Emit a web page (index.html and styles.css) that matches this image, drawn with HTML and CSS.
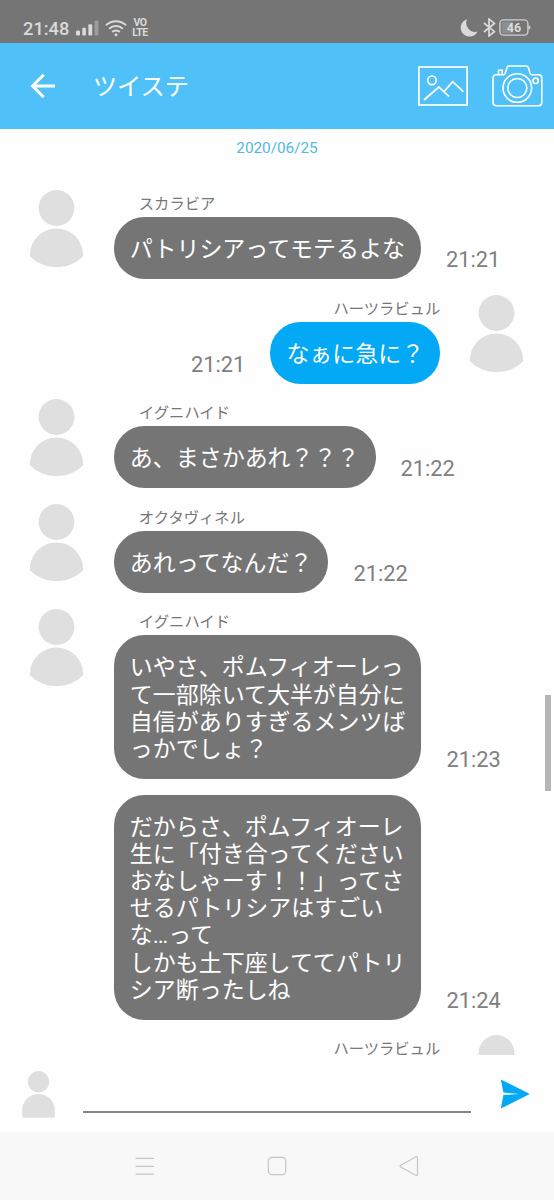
FILE: index.html
```html
<!DOCTYPE html>
<html lang="ja">
<head>
<meta charset="utf-8">
<title>ツイステ</title>
<link rel="stylesheet" href="styles.css">
</head>
<body>
<svg class="defs" width="0" height="0" aria-hidden="true">
  <defs>
    <clipPath id="round"><circle cx="38.5" cy="38.5" r="38.6"/></clipPath>
    <symbol id="person" viewBox="0 0 77 77">
      <g clip-path="url(#round)" fill="#dfdfdf">
        <circle cx="38.5" cy="18" r="17.9"/>
        <path d="M11.9 77V65a26.6 26.6 0 0 1 53.2 0V77z"/>
      </g>
    </symbol>
  </defs>
</svg>
<div class="phone">
  <div class="status">
    <span class="clock">21:48</span>
    <svg class="signal" width="23" height="16" viewBox="0 0 23 16" fill="#dadada">
      <rect x="0" y="10.5" width="4" height="5" rx="1"/>
      <rect x="6.3" y="7.8" width="3.6" height="7.7" rx="1"/>
      <rect x="12.4" y="4.2" width="3.8" height="11.3" rx="1"/>
      <rect x="18.6" y="0.5" width="3.8" height="15" rx="1" fill="#9c9c9c"/>
    </svg>
    <svg class="wifi" width="22" height="18" viewBox="0 0 22 18" fill="none" stroke="#dadada" stroke-width="2.1">
      <path d="M1 6.2a14.5 14.5 0 0 1 20 0"/>
      <path d="M4.2 9.7a10 10 0 0 1 13.6 0"/>
      <path d="M7.2 13a5.7 5.7 0 0 1 7.6 0"/>
      <circle cx="11" cy="15.8" r="1.5" fill="#dadada" stroke="none"/>
    </svg>
    <span class="volte"><span>VO</span><span>LTE</span></span>
    <span class="spacer"></span>
    <svg class="moon" width="18" height="18" viewBox="0 0 18 18"><path d="M7 0.2a8.9 8.9 0 1 0 10.6 12.4A9.1 9.1 0 0 1 7 0.2z" fill="#dadada"/></svg>
    <svg class="bt" width="13" height="19" viewBox="0 0 13 19" fill="none" stroke="#dadada" stroke-width="1.7"><path d="M1 5L11.4 13.7L6 18V1L11.4 5.4L1 14"/></svg>
    <svg class="battery" width="32" height="17" viewBox="0 0 32 17">
      <rect x="0.9" y="0.9" width="28" height="15.2" rx="3.6" fill="none" stroke="#cfcfcf" stroke-width="1.4"/>
      <rect x="2.6" y="2.6" width="11.5" height="11.8" rx="2" fill="#8d8d8d"/>
      <path d="M29.5 6.3q2 .3 2 2.2t-2 2.2z" fill="#cfcfcf"/>
      <text class="level" x="15" y="12.9" text-anchor="middle">46</text>
    </svg>
  </div>

  <header class="bar">
    <svg class="back" width="26" height="26" viewBox="0 0 26 26" fill="none" stroke="#fff" stroke-width="3"><path d="M25 13H3M13.7 1.8L2.6 13l11.1 11.2"/></svg>
    <h1 class="title">ツイステ</h1>
    <svg class="picture" width="50" height="40" viewBox="0 0 50 40" fill="none" stroke="#fff" stroke-width="1.7">
      <rect x="0.9" y="1" width="48.2" height="38"/>
      <circle cx="14" cy="14.3" r="4.3"/>
      <path d="M6 34L20.8 21L31 30.5M26 25.5L34.7 15.6L45.3 25.6"/>
    </svg>
    <svg class="camera" width="51" height="42" viewBox="0 0 51 42" fill="none" stroke="#fff" stroke-width="1.6">
      <path d="M4.3 9.7H11.8Q12.7 9.7 13 8.8L15.2 2.2Q15.5 1 16.7 1H34.6Q35.8 1 36.2 2.2L38.3 8.8Q38.6 9.7 39.6 9.7H46.6Q49.8 9.7 49.8 12.9V37.5Q49.8 40.7 46.6 40.7H4.3Q1 40.7 1 37.5V12.9Q1 9.7 4.3 9.7z"/>
      <path d="M6.5 9.5V5.3H10.2V9.5"/>
      <circle cx="25.3" cy="23" r="14.3"/>
      <circle cx="25.3" cy="23" r="9.5"/>
      <circle cx="43.6" cy="15.8" r="2.7"/>
    </svg>
  </header>

  <main class="chat">
    <div class="date">2020/06/25</div>
    <section class="msg">
      <svg class="avatar"><use href="#person"/></svg>
      <div class="body"><div class="name">スカラビア</div>
        <div class="line"><p class="bubble">パトリシアってモテるよな</p><time>21:21</time></div></div>
    </section>
    <section class="msg mine">
      <svg class="avatar"><use href="#person"/></svg>
      <div class="body"><div class="name">ハーツラビュル</div>
        <div class="line"><p class="bubble">なぁに急に？</p><time>21:21</time></div></div>
    </section>
    <section class="msg">
      <svg class="avatar"><use href="#person"/></svg>
      <div class="body"><div class="name">イグニハイド</div>
        <div class="line"><p class="bubble">あ、まさかあれ？？？</p><time>21:22</time></div></div>
    </section>
    <section class="msg">
      <svg class="avatar"><use href="#person"/></svg>
      <div class="body"><div class="name">オクタヴィネル</div>
        <div class="line"><p class="bubble">あれってなんだ？</p><time>21:22</time></div></div>
    </section>
    <section class="msg">
      <svg class="avatar"><use href="#person"/></svg>
      <div class="body"><div class="name">イグニハイド</div>
        <div class="line"><p class="bubble">いやさ、ポムフィオーレっ<br>て一部除いて大半が自分に<br>自信がありすぎるメンツば<br>っかでしょ？</p><time>21:23</time></div>
        <div class="line"><p class="bubble">だからさ、ポムフィオーレ<br>生に「付き合ってください<br>おなしゃーす！！」ってさ<br>せるパトリシアはすごい<br>な…って<br>しかも土下座しててパトリ<br>シア断ったしね</p><time>21:24</time></div></div>
    </section>
    <section class="msg mine">
      <svg class="avatar"><use href="#person"/></svg>
      <div class="body"><div class="name">ハーツラビュル</div></div>
    </section>
    <div class="thumb"></div>
  </main>

  <footer class="composer">
    <svg class="self" width="33" height="47" viewBox="0 0 33 47" fill="#dfdfdf"><circle cx="16.5" cy="10.8" r="10.7"/><path d="M0.2 39.3a16.3 16.3 0 0 1 32.6 0V45.4q0 1.3-1.3 1.3H1.5q-1.3 0-1.3-1.3z"/></svg>
    <div class="input"></div>
    <svg class="send" width="30" height="30" viewBox="0 0 30 30" fill="#03a9f4"><path d="M0.8 0.5L29.8 15L0.8 29.5L3.4 16L19 14.9L3.4 13.6z"/></svg>
  </footer>

  <nav class="nav">
    <svg width="20" height="20" viewBox="0 0 20 20" stroke="#c6c6c6" stroke-width="1.2"><path d="M0.6 2.4H19.2M0.6 10.3H19.2M0.6 18.1H19.2"/></svg>
    <svg width="20" height="20" viewBox="0 0 20 20" fill="none" stroke="#c6c6c6" stroke-width="1.2"><rect x="1.3" y="1.3" width="17.4" height="17.4" rx="3.6"/></svg>
    <svg width="20" height="22" viewBox="0 0 20 22" fill="none" stroke="#c6c6c6" stroke-width="1.2" stroke-linejoin="round"><path d="M1.7 10.2Q0.3 11.1 1.7 12L16.7 20.2Q18.5 21 18.5 19.2V2.9Q18.5 1 16.7 1.9z"/></svg>
  </nav>
</div>
</body>
</html>
```
FILE: styles.css
```css
* { box-sizing: border-box; }

body {
  margin: 0;
  background: #fefefe;
  font-family: Roboto, "Noto Sans CJK JP", sans-serif;
}

.defs { position: absolute; }

.phone {
  display: flex;
  flex-direction: column;
  width: 554px;
  height: 1200px;
  overflow: hidden;
}

svg { flex: none; display: block; }

.status {
  display: flex;
  align-items: flex-start;
  flex: none;
  height: 43px;
  padding: 0 23px 0 23px;
  background: #757575;
  color: #dadada;
}

.clock {
  width: 53px;
  padding-top: 17px;
  font-size: 18.3px;
  font-weight: 500;
  line-height: 24px;
}

.signal { margin-top: 20px; }
.wifi { margin: 18.5px 0 0 6px; }

.volte {
  display: flex;
  flex-direction: column;
  align-items: center;
  width: 18px;
  margin: 18px 0 0 4px;
  font-size: 10.5px;
  font-weight: 700;
  letter-spacing: -0.4px;
  line-height: 9.5px;
}

.spacer { flex: 1; }
.moon { margin-top: 19px; }
.bt { margin: 18px 3px 0 5px; }
.battery { margin: 19px 0 0; }

.level {
  fill: #dadada;
  font-size: 12.5px;
  font-weight: 700;
}

.bar {
  display: flex;
  align-items: center;
  flex: none;
  height: 86px;
  padding: 0 11px 0 30px;
  background: #4fc1f8;
}

.title {
  flex: 1;
  margin: 0 0 0 36.7px;
  padding-top: 1px;
  color: #fff;
  font-size: 24.3px;
  font-weight: 400;
  line-height: 36px;
}

.camera { margin-left: 24px; }

.chat {
  position: relative;
  flex: none;
  height: 926px;
  overflow: hidden;
}

.date {
  height: 61.4px;
  padding-top: 9px;
  color: #52b8e8;
  font-size: 15.3px;
  line-height: 20px;
  text-align: center;
}

.msg {
  display: flex;
  padding: 0 18.5px;
}

.mine { flex-direction: row-reverse; }

.avatar {
  width: 77px;
  height: 77px;
  margin: 0 0.3px 0 -0.3px;
}

.body { margin: 0 18.3px; }

.name {
  height: 26.7px;
  padding: 4.8px 25px 0;
  color: #777;
  font-size: 15.3px;
  line-height: 18px;
}

.mine .name {
  padding: 4.8px 0 0;
  text-align: right;
}

.line {
  display: flex;
  align-items: flex-end;
  margin-bottom: 15.9px;
}

.mine .line { flex-direction: row-reverse; }

.bubble {
  margin: 0;
  padding: 19.2px 16px 15.6px;
  border-radius: 30.5px;
  background: #757575;
  color: #fff;
  font-size: 22.98px;
  line-height: 27.17px;
  white-space: nowrap;
}

.mine .bubble { background: #03a9f4; }

time {
  margin: 0 25px 6px;
  color: #808080;
  font-size: 21.8px;
  line-height: 26px;
}

.thumb {
  position: absolute;
  top: 566px;
  right: 3px;
  width: 6px;
  height: 96px;
  background: #b6b6b6;
}

.composer {
  display: flex;
  flex: none;
  height: 77px;
  padding: 0 24px 0 22px;
}

.self { margin-top: 15.5px; }

.input {
  flex: 1;
  height: 58px;
  margin: 0 29px 0 28px;
  border-bottom: 2px solid #858585;
}

.send { margin-top: 24px; }

.nav {
  display: flex;
  align-items: center;
  justify-content: center;
  gap: 112px;
  flex: none;
  height: 68px;
  background: #f8f8f8;
}
```
